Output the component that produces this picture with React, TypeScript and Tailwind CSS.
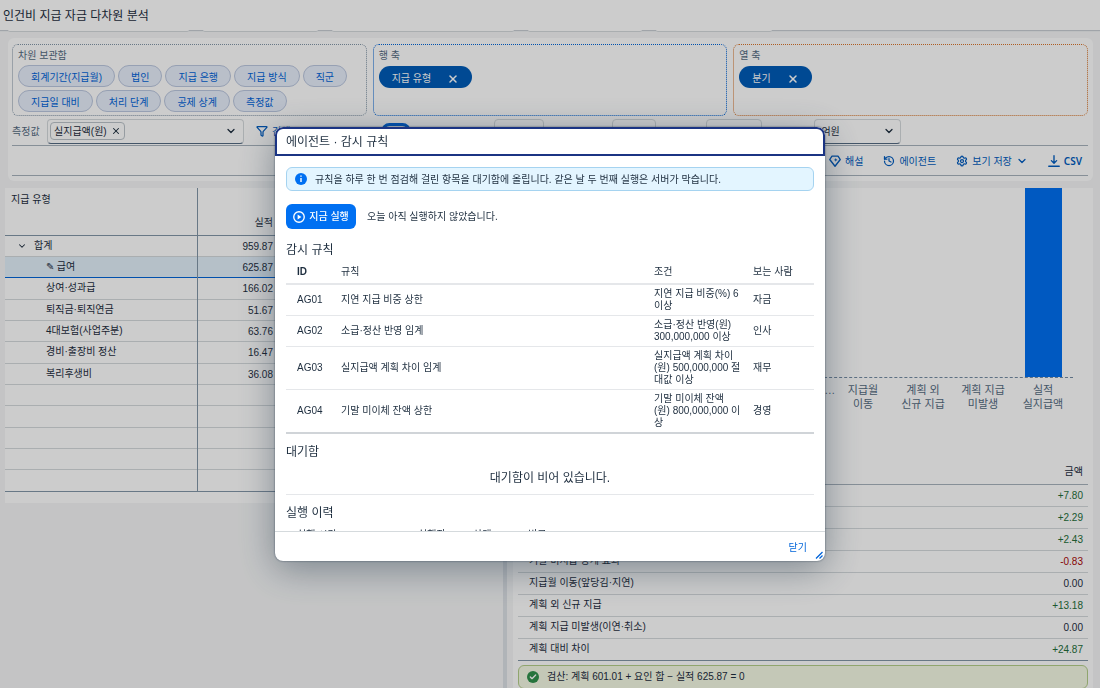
import type { ReactNode } from "react";
import { clsx } from "clsx";
import { Check, ChevronDown, Filter, History, Settings, X } from "lucide-react";

type Rule = {
	id: string;
	name: string;
	condition: string;
	viewer: string;
};

const storedDimensions = [
	"회계기간(지급월)",
	"법인",
	"지급 은행",
	"지급 방식",
	"직군",
	"지급일 대비",
	"처리 단계",
	"공제 상계",
	"측정값",
];

const gridRows = [
	{ label: "급여", value: "625.87", selected: true },
	{ label: "상여·성과급", value: "166.02" },
	{ label: "퇴직금·퇴직연금", value: "51.67" },
	{ label: "4대보험(사업주분)", value: "63.76" },
	{ label: "경비·출장비 정산", value: "16.47" },
	{ label: "복리후생비", value: "36.08" },
	{ label: "", value: "" },
	{ label: "", value: "" },
	{ label: "", value: "" },
	{ label: "", value: "" },
	{ label: "", value: "" },
];

const chartBars = [
	{ label: ["기말 미이체…", ""], height: 0 },
	{ label: ["지급월", "이동"], height: 0 },
	{ label: ["계획 외", "신규 지급"], height: 0 },
	{ label: ["계획 지급", "미발생"], height: 0 },
	{ label: ["실적", "실지급액"], height: 189 },
];

const factors = [
	{ label: "", amount: "+7.80" },
	{ label: "", amount: "+2.29" },
	{ label: "", amount: "+2.43" },
	{ label: "기말 미지급 상계 효과", amount: "-0.83" },
	{ label: "지급월 이동(앞당김·지연)", amount: "0.00" },
	{ label: "계획 외 신규 지급", amount: "+13.18" },
	{ label: "계획 지급 미발생(이연·취소)", amount: "0.00" },
	{ label: "계획 대비 차이", amount: "+24.87" },
];

const rules: Rule[] = [
	{ id: "AG01", name: "지연 지급 비중 상한", condition: "지연 지급 비중(%) 6\n이상", viewer: "자금" },
	{ id: "AG02", name: "소급·정산 반영 임계", condition: "소급·정산 반영(원)\n300,000,000 이상", viewer: "인사" },
	{ id: "AG03", name: "실지급액 계획 차이 임계", condition: "실지급액 계획 차이\n(원) 500,000,000 절\n대값 이상", viewer: "재무" },
	{ id: "AG04", name: "기말 미이체 잔액 상한", condition: "기말 미이체 잔액\n(원) 800,000,000 이\n상", viewer: "경영" },
];

function InsightIcon() {
	return (
		<svg className="size-3" viewBox="0 0 16 16" fill="none" stroke="currentColor" strokeWidth="1.8" strokeLinejoin="round" aria-hidden="true">
			<path d="M4 1.5h8l3 4.5-7 9L1 6z" />
			<path d="M9 4l.7 1.8 1.8.7-1.8.7L9 9l-.7-1.8-1.8-.7 1.8-.7z" fill="currentColor" stroke="none" />
		</svg>
	);
}

function DownloadIcon() {
	return (
		<svg className="size-3" viewBox="0 0 16 16" fill="none" stroke="currentColor" strokeWidth="1.8" strokeLinecap="round" strokeLinejoin="round" aria-hidden="true">
			<path d="M8 1v10M4.5 7.5L8 11l3.5-3.5M1 15h14" />
		</svg>
	);
}

function PlayIcon() {
	return (
		<svg className="size-3" viewBox="0 0 16 16" fill="none" stroke="currentColor" strokeWidth="1.8" aria-hidden="true">
			<circle cx="8" cy="8" r="7" />
			<path d="M6.2 4.8v6.4L11.2 8z" fill="currentColor" stroke="none" />
		</svg>
	);
}

function AxisBox({ title, className, children }: { title: string; className: string; children: ReactNode }) {
	return (
		<section className={clsx("h-[72px] min-w-0 flex-1 rounded-md border border-dotted px-[5px] pt-[5px]", className)}>
			<h2 className="text-[10px] leading-3 text-[#556b82]">{title}</h2>
			{children}
		</section>
	);
}

function AxisToken({ label }: { label: string }) {
	return (
		<span className="mt-1 inline-flex h-[22px] items-center gap-4 rounded-full bg-[#005cb8] px-[13px] pt-1 text-[10px] leading-4 text-white">
			{label}
			<button type="button" aria-label={`${label} 제거`}>
				<X className="size-3" strokeWidth={3} />
			</button>
		</span>
	);
}

function ToolbarButton({ icon, children }: { icon: ReactNode; children: ReactNode }) {
	return (
		<button type="button" className="flex items-center gap-1 whitespace-nowrap text-[#005cc0]">
			{icon}
			{children}
		</button>
	);
}

function FilterCards() {
	return (
		<div className="flex h-2 items-start gap-3.5 pl-2">
			<div className="h-0.5 w-[181px] rounded-b-md border-b border-[#d5dadd] bg-white" />
			<div className="h-0.5 w-[115px] rounded-b-md border-b border-[#d5dadd] bg-white" />
			<div className="h-0.5 w-[182px] rounded-b-md border-b border-[#d5dadd] bg-white" />
			<div className="h-0.5 w-[114px] rounded-b-md border-b border-[#d5dadd] bg-white" />
			<div className="h-0.5 w-[116px] rounded-b-md border-b border-[#d5dadd] bg-white" />
		</div>
	);
}

function DimensionPanel() {
	return (
		<div className="mr-[7px] ml-2 rounded-md bg-white pt-1.5 pr-[5px] pb-[5px] pl-1">
			<div className="flex gap-1.5">
				<AxisBox title="차원 보관함" className="border-[#8396a8]">
					<div className="mt-[3px] flex flex-wrap gap-[3px]">
						{storedDimensions.map((name) => (
							<button
								key={name}
								type="button"
								className="h-[22px] rounded-full border border-[#bcc8e0] bg-[#e8effc] px-3 pt-1 text-[10px] leading-4 whitespace-nowrap text-[#0064d9]"
							>
								{name}
							</button>
						))}
					</div>
				</AxisBox>
				<AxisBox title="행 축" className="border-[#0064d9]">
					<AxisToken label="지급 유형" />
				</AxisBox>
				<AxisBox title="열 축" className="border-[#d9752b]">
					<AxisToken label="분기" />
				</AxisBox>
			</div>

			<div className="flex h-[30px] items-center border-b border-[#a8b3bd] pt-px text-[10px]">
				<span id="measure-label" className="w-[35px] text-[#556b82]">측정값</span>
				<button
					type="button"
					aria-labelledby="measure-label"
					className="flex h-[25px] w-[197px] items-center justify-between rounded-sm border border-[#d5dadd] border-b-[#556b82] pr-1.5 pl-0.5"
				>
					<span className="flex h-[18px] items-center gap-1 rounded-sm border border-[#bcc3ca] px-[3px]">
						실지급액(원)
						<X className="size-2.5" strokeWidth={2.5} />
					</span>
					<ChevronDown className="size-3" strokeWidth={2.5} />
				</button>
				<span className="ml-3">
					<ToolbarButton icon={<Filter className="size-3" strokeWidth={2.5} />}>검색</ToolbarButton>
				</span>
				<label className="ml-[91px] flex">
					<span className="sr-only">실적 표시</span>
					<input type="checkbox" defaultChecked className="h-[17px] w-[30px] appearance-none rounded-full border-[3px] border-[#0064d9] bg-white" />
				</label>
				<input aria-label="시작 월" className="ml-[83px] h-[25px] w-[50px] rounded-sm border border-[#d5dadd]" />
				<input aria-label="종료 월" className="ml-[68px] h-[25px] w-11 rounded-sm border border-[#d5dadd]" />
				<input aria-label="버전" className="ml-[50px] h-[25px] w-14 rounded-sm border border-[#d5dadd]" />
				<div className="relative ml-[52px] flex items-center">
					<select
						aria-label="단위"
						defaultValue="억원"
						className="h-[25px] w-[87px] appearance-none rounded-sm border border-[#d5dadd] border-b-[#556b82] pl-1.5"
					>
						<option>억원</option>
					</select>
					<ChevronDown className="pointer-events-none absolute right-1.5 size-3" strokeWidth={2.5} />
				</div>
			</div>

			<div className="flex h-[30px] items-center justify-end gap-5 border-b border-[#a8b3bd] pt-px pr-1.5 text-[10px]">
				<ToolbarButton icon={<InsightIcon />}>해설</ToolbarButton>
				<ToolbarButton icon={<History className="size-3" strokeWidth={2.5} />}>에이전트</ToolbarButton>
				<ToolbarButton icon={<Settings className="size-3" strokeWidth={2.5} />}>
					보기 저장
					<ChevronDown className="size-3" strokeWidth={2.5} />
				</ToolbarButton>
				<ToolbarButton icon={<DownloadIcon />}>
					<b className="font-['Noto_Sans'] font-semibold">CSV</b>
				</ToolbarButton>
			</div>
		</div>
	);
}

function PivotGrid() {
	return (
		<section className="w-[497px] shrink-0 self-start bg-white pb-[11px]">
			<table className="w-full table-fixed border-collapse text-[10px] leading-3">
				<thead>
					<tr className="h-[47px] border-b border-[#8396a8]">
						<th className="w-[192px] border-r border-[#8396a8] pt-1.5 pl-1.5 text-left align-top font-normal">지급 유형</th>
						<th className="w-[79px] pr-[3px] pb-1.5 text-right align-bottom font-normal">실적</th>
						<th />
					</tr>
				</thead>
				<tbody className="[&>tr]:h-[21px] [&>tr:nth-child(3n)]:h-[22px]">
					<tr className="border-b border-[#d5dadd]">
						<td className="border-r border-[#8396a8] pl-3">
							<span className="flex items-center gap-[7px]">
								<ChevronDown className="size-2.5" strokeWidth={2.5} />
								합계
							</span>
						</td>
						<td className="pt-0.5 pr-[3px] text-right">959.87</td>
						<td />
					</tr>
					{gridRows.map((row, i) => (
						<tr
							key={i}
							className={clsx(
								"border-b",
								row.selected ? "border-[#0064d9] bg-[#e3f0fb]" : "border-[#d5dadd] last:border-[#8396a8]",
							)}
						>
							<td className="border-r border-[#8396a8] pl-[41px]">
								{row.selected && "✎ "}
								{row.label}
							</td>
							<td className="pt-0.5 pr-[3px] text-right">{row.value}</td>
							<td />
						</tr>
					))}
				</tbody>
			</table>
		</section>
	);
}

function VariancePanel() {
	return (
		<section className="min-w-0 flex-1 bg-white px-[5px]">
			<div className="mx-[15px] h-[270px]">
				<div className="flex h-[190px] items-end justify-end border-b border-dashed border-[#758ca4]">
					{chartBars.map((bar, i) => (
						<div key={i} className="flex w-[60px] justify-center">
							<div className="w-[37px] bg-[#0070f2]" style={{ height: bar.height }} />
						</div>
					))}
				</div>
				<div className="flex justify-end pt-[5px] text-center text-[11px] leading-[14px] whitespace-nowrap text-[#556b82]">
					{chartBars.map((bar, i) => (
						<div key={i} className="flex w-[60px] flex-col items-center">
							<span>{bar.label[0]}</span>
							<span>{bar.label[1]}</span>
						</div>
					))}
				</div>
			</div>
			<table className="w-full border-collapse text-[10px] leading-3">
				<thead>
					<tr className="h-[26px] border-b border-[#a8b3bd]">
						<th aria-label="요인" />
						<th className="pt-0.5 pr-[5px] text-right font-normal">금액</th>
					</tr>
				</thead>
				<tbody>
					{factors.map((factor, i) => (
						<tr key={i} className="h-[22px] border-b border-[#d5dadd] last:border-[#8396a8]">
							<td className="pl-[11px]">{factor.label}</td>
							<td
								className={clsx(
									"pt-0.5 pr-[5px] text-right",
									factor.amount.startsWith("+") && "text-[#256f3a]",
									factor.amount.startsWith("-") && "text-[#aa0808]",
								)}
							>
								{factor.amount}
							</td>
						</tr>
					))}
				</tbody>
			</table>
			<p className="mt-1 flex h-6 items-center gap-2 rounded-md border border-[#b5cf8a] bg-[#f5fae5] pl-2 text-[10px]">
				<span className="grid size-3 place-items-center rounded-full bg-[#30914c] text-white">
					<Check className="size-2" strokeWidth={4} />
				</span>
				검산: 계획 601.01 + 요인 합 − 실적 625.87 = 0
			</p>
		</section>
	);
}

function AgentDialog() {
	return (
		<div className="fixed inset-0 flex items-center justify-center bg-black/20">
			<div
				role="dialog"
				aria-modal="true"
				aria-labelledby="dialog-title"
				className="relative flex h-[434px] max-h-full w-[550px] max-w-full flex-col overflow-hidden rounded-lg bg-white shadow-[0_8px_36px_rgba(34,53,72,0.45),0_0_2px_rgba(34,53,72,0.8)]"
			>
				<header className="flex h-[29px] shrink-0 items-center rounded-t-lg border-2 border-[#1b3483] px-[9px] pt-px">
					<h1 id="dialog-title" className="text-[12px]">에이전트 · 감시 규칙</h1>
				</header>

				<div className="min-h-0 flex-1 overflow-hidden px-[11px] pt-[11px]">
					<p className="flex h-6 items-center gap-2 rounded-md border border-[#a5d3f0] bg-[#e3f5ff] pl-2 text-[10px]">
						<svg className="size-3" viewBox="0 0 12 12" aria-hidden="true">
							<circle cx="6" cy="6" r="6" fill="#0070f2" />
							<path d="M6 5v4M6 2.5v1.3" stroke="#fff" strokeWidth="1.4" />
						</svg>
						규칙을 하루 한 번 점검해 걸린 항목을 대기함에 올립니다. 같은 날 두 번째 실행은 서버가 막습니다.
					</p>

					<div className="mt-[13px] flex items-center gap-[11px] text-[10px]">
						<button type="button" className="flex h-[25px] w-[70px] items-center justify-center gap-1 rounded-md bg-[#0070f2] font-medium text-white">
							<PlayIcon />
							지금 실행
						</button>
						<span>오늘 아직 실행하지 않았습니다.</span>
					</div>

					<h2 className="mt-3 text-[12px] leading-[18px]">감시 규칙</h2>
					<table className="w-full table-fixed border-collapse text-left text-[10px] leading-3">
						<thead>
							<tr className="h-[25px] border-b-2 border-[#e5e7ea]">
								<th className="w-[55px] pt-0.5 pl-[11px] font-bold">ID</th>
								<th className="pt-0.5 font-normal">규칙</th>
								<th className="w-[99px] pt-0.5 font-normal">조건</th>
								<th className="w-[61px] pt-0.5 font-normal">보는 사람</th>
							</tr>
						</thead>
						<tbody>
							{rules.map((rule) => (
								<tr key={rule.id} className="border-b border-[#e5e7ea] last:border-b-2 last:border-[#d0d4d8]">
									<td className="pl-[11px]">{rule.id}</td>
									<td>{rule.name}</td>
									<td className="py-[3px] whitespace-pre-line">{rule.condition}</td>
									<td>{rule.viewer}</td>
								</tr>
							))}
						</tbody>
					</table>

					<h2 className="mt-[9px] text-[12px] leading-[18px]">대기함</h2>
					<p className="border-b border-[#e5e7ea] pt-2 pb-[7px] text-center text-[12px] leading-[18px]">대기함이 비어 있습니다.</p>

					<h2 className="mt-[9px] text-[12px] leading-[18px]">실행 이력</h2>
					<table className="w-full table-fixed text-left text-[10px] leading-3">
						<thead>
							<tr>
								<th className="w-[132px] pt-[7px] pl-[11px] font-normal">실행 시각</th>
								<th className="w-[55px] pt-[7px] font-normal">실행자</th>
								<th className="w-[55px] pt-[7px] font-normal">상태</th>
								<th className="pt-[7px] font-normal">비고</th>
							</tr>
						</thead>
					</table>
				</div>

				<footer className="flex h-[30px] shrink-0 items-center justify-end border-t border-[#d5dadd] pt-px pr-[18px]">
					<button type="button" className="text-[10px] text-[#0064d9]">닫기</button>
				</footer>
				<svg className="absolute right-0.5 bottom-0.5 size-2 text-[#0064d9]" viewBox="0 0 8 8" stroke="currentColor" strokeWidth="1.3" aria-hidden="true">
					<path d="M1 7.5 L7.5 1 M4.5 7.5 L7.5 4.5" />
				</svg>
			</div>
		</div>
	);
}

export default function App() {
	return (
		<div className="h-screen overflow-hidden bg-[#f5f6f7] font-['Liberation_Sans','Noto_Sans_CJK_KR',sans-serif] text-[#1d2d3e]">
			<header className="flex h-[30px] items-center bg-white px-[3px] pt-px shadow-[0_1px_1px_#c8ced4]">
				<h1 className="text-[12px]">인건비 지급 자금 다차원 분석</h1>
			</header>
			<FilterCards />
			<DimensionPanel />
			<main className="mt-[7px] flex pr-[7px] pl-[5px]">
				<PivotGrid />
				<div className="mr-1.5 ml-px w-1 shrink-0 bg-[#dde1e6]" />
				<VariancePanel />
			</main>
			<AgentDialog />
		</div>
	);
}
